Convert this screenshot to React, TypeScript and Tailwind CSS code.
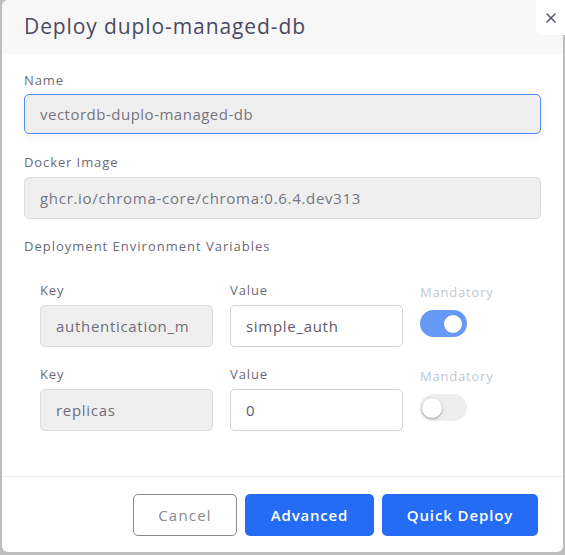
import { X } from 'lucide-react'

const font = { fontFamily: '"Open Sans", "Liberation Sans", sans-serif' }

function Toggle({ on }: { on: boolean }) {
  return (
    <div
      className={
        on
          ? 'flex h-[27px] w-[47px] items-center justify-end rounded-full bg-[#6699f5] px-[5px]'
          : 'flex h-[27px] w-[47px] items-center justify-start rounded-full bg-[#eeeeee] px-[2px]'
      }
    >
      <div className={on ? 'h-[18px] w-[18px] rounded-full bg-white' : 'h-[20px] w-[20px] rounded-full bg-white shadow-[0_1px_3px_rgba(0,0,0,0.35)]'} />
    </div>
  )
}

function EnvRow({ k, v, on }: { k: string; v: string; on: boolean }) {
  return (
    <div className="flex gap-[17px]">
      <div className="w-[173px]">
        <div className="h-[16px] text-[13px] leading-[16px] tracking-[0.9px] text-[#6b6a78]">Key</div>
        <div className="mt-[7px] flex h-[42px] items-center overflow-hidden whitespace-nowrap rounded-[5px] border border-[#dcdcdc] bg-[#efefef] px-[15px] text-[15px] tracking-[0.7px] text-[#6f6e7a]">
          {k}
        </div>
      </div>
      <div className="w-[173px]">
        <div className="h-[16px] text-[13px] leading-[16px] tracking-[0.9px] text-[#6b6a78]">Value</div>
        <div className="mt-[7px] flex h-[42px] items-center rounded-[5px] border border-[#d0d0d6] bg-white px-[15px] text-[15px] tracking-[0.7px] text-[#5e5d6b]">
          {v}
        </div>
      </div>
      <div>
        <div className="mt-[2px] h-[16px] text-[13px] leading-[16px] tracking-[0.8px] text-[#c3c8d2]">Mandatory</div>
        <div className="mt-[10px]">
          <Toggle on={on} />
        </div>
      </div>
    </div>
  )
}

export default function App() {
  return (
    <div className="relative h-[555px] w-[565px] overflow-hidden bg-[#bdbdbd]" style={font}>
      <div className="ml-[2px] flex h-[552px] w-[561px] flex-col overflow-hidden rounded-b-[6px] rounded-tl-[6px] bg-white">
        <div className="flex h-[54px] items-center bg-[#f7f7f7] px-[22px]">
          <h1 className="text-[21px] tracking-[0.9px] text-[#4b4a5e]">Deploy duplo-managed-db</h1>
        </div>

        <div className="flex-1 px-[22px] pt-[18px]">
          <div className="h-[16px] text-[13px] leading-[16px] tracking-[0.9px] text-[#6b6a78]">Name</div>
          <div className="mt-[6px] flex h-[40px] items-center rounded-[5px] border border-[#4f8cf5] bg-[#efefef] px-[15px] text-[15px] tracking-[0.5px] text-[#76757f] shadow-[0_3px_8px_rgba(0,0,0,0.05)]">
            vectordb-duplo-managed-db
          </div>

          <div className="mt-[20px] h-[16px] text-[13px] leading-[16px] tracking-[0.9px] text-[#6b6a78]">Docker Image</div>
          <div className="mt-[7px] flex h-[42px] items-center rounded-[5px] border border-[#dcdcdc] bg-[#efefef] px-[15px] text-[15px] tracking-[0.7px] text-[#76757f]">
            ghcr.io/chroma-core/chroma:0.6.4.dev313
          </div>

          <div className="mt-[19px] h-[16px] text-[13px] leading-[16px] tracking-[1px] text-[#6b6a78]">Deployment Environment Variables</div>

          <div className="mt-[28px] flex flex-col gap-[19px] pl-[16px]">
            <EnvRow k="authentication_m" v="simple_auth" on />
            <EnvRow k="replicas" v="0" on={false} />
          </div>
        </div>

        <div className="flex h-[76px] items-start justify-end gap-[8px] border-t border-[#ececec] pt-[17px] pr-[25px]">
          <button className="h-[42px] w-[104px] rounded-[5px] border border-[#8a8a8a] bg-white text-[15px] tracking-[1.2px] text-[#8a8a92]">
            Cancel
          </button>
          <button className="h-[42px] w-[129px] rounded-[5px] bg-[#246bf6] text-[15px] font-semibold tracking-[0.8px] text-white">
            Advanced
          </button>
          <button className="h-[42px] w-[156px] rounded-[5px] bg-[#246bf6] text-[15px] font-semibold tracking-[0.9px] text-white">
            Quick Deploy
          </button>
        </div>
      </div>

      <button className="absolute right-0 top-0 flex h-[35px] w-[29px] items-center justify-center rounded-bl-[6px] bg-white text-[#55546a]">
        <X size={16} strokeWidth={2.2} />
      </button>
    </div>
  )
}
